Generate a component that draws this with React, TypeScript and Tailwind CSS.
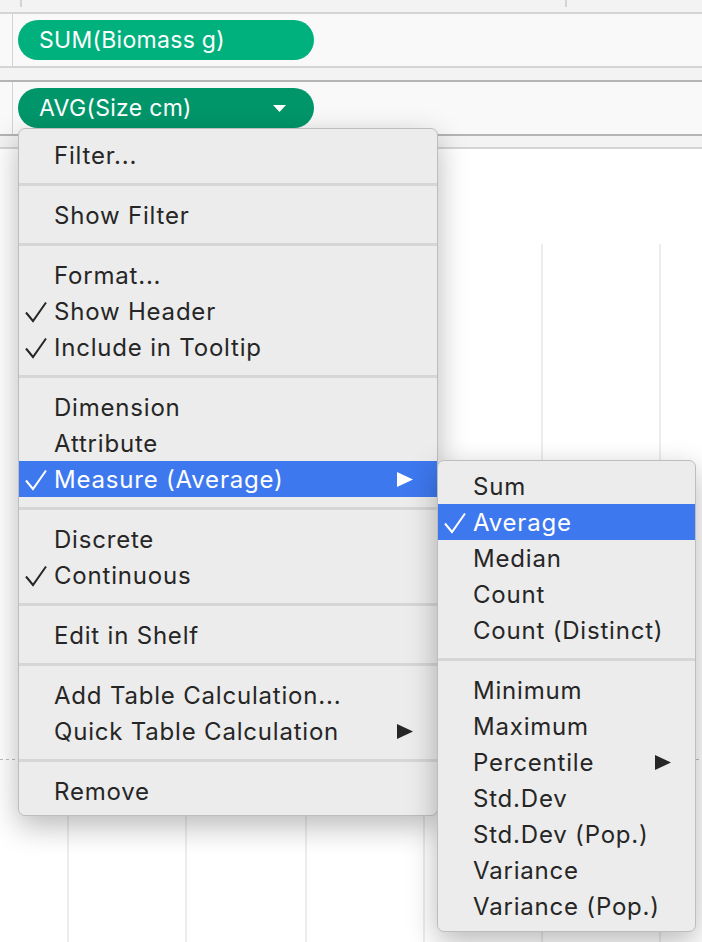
import React from 'react';

type Item = { label: string; checked?: boolean; arrow?: boolean; active?: boolean } | 'sep';

const mainItems: Item[] = [
  { label: 'Filter...' },
  'sep',
  { label: 'Show Filter' },
  'sep',
  { label: 'Format...' },
  { label: 'Show Header', checked: true },
  { label: 'Include in Tooltip', checked: true },
  'sep',
  { label: 'Dimension' },
  { label: 'Attribute' },
  { label: 'Measure (Average)', checked: true, arrow: true, active: true },
  'sep',
  { label: 'Discrete' },
  { label: 'Continuous', checked: true },
  'sep',
  { label: 'Edit in Shelf' },
  'sep',
  { label: 'Add Table Calculation...' },
  { label: 'Quick Table Calculation', arrow: true },
  'sep',
  { label: 'Remove' },
];

const subItems: Item[] = [
  { label: 'Sum' },
  { label: 'Average', checked: true, active: true },
  { label: 'Median' },
  { label: 'Count' },
  { label: 'Count (Distinct)' },
  'sep',
  { label: 'Minimum' },
  { label: 'Maximum' },
  { label: 'Percentile', arrow: true },
  { label: 'Std.Dev' },
  { label: 'Std.Dev (Pop.)' },
  { label: 'Variance' },
  { label: 'Variance (Pop.)' },
];

function Check() {
  return (
    <svg width="22" height="22" viewBox="0 0 22 22" fill="none" stroke="currentColor" strokeWidth={2}>
      <path d="M1 11.5 L8 20 L21 1.5" />
    </svg>
  );
}

function Arrow() {
  return (
    <svg width="16" height="15" viewBox="0 0 16 15" fill="currentColor">
      <polygon points="0,0 16,7.5 0,15" />
    </svg>
  );
}

function MenuList({ items }: { items: Item[] }) {
  return (
    <>
      {items.map((item, i) =>
        item === 'sep' ? (
          <div key={i} className="mt-[10px] mb-[11px] h-[3px] bg-[#d6d6d6]" />
        ) : (
          <div
            key={i}
            className={`relative flex h-[36px] items-center pt-[1px] pl-[35px] pr-[24px] ${
              item.active ? 'bg-[#3e78ef] text-white' : 'text-[#262626]'
            }`}
          >
            {item.checked && (
              <span className="absolute left-[6px] top-[8px]">
                <Check />
              </span>
            )}
            <span className="flex-1 whitespace-nowrap">{item.label}</span>
            {item.arrow && <Arrow />}
          </div>
        )
      )}
    </>
  );
}

function Pill({ label, dark }: { label: string; dark?: boolean }) {
  return (
    <div
      className={`flex h-[40px] w-[296px] items-center rounded-full pl-[21px] pr-[28px] text-[23px] tracking-[0.3px] text-white ${
        dark ? 'bg-[#00966a]' : 'bg-[#00b17d]'
      }`}
    >
      <span className="flex-1">{label}</span>
      {dark && (
        <svg width="13" height="7" viewBox="0 0 13 7" fill="white">
          <polygon points="0,0 13,0 6.5,7" />
        </svg>
      )}
    </div>
  );
}

export default function App() {
  return (
    <div
      className="relative flex h-[942px] w-[702px] flex-col overflow-hidden bg-white"
      style={{ fontFamily: 'Inter, "Noto Sans", sans-serif' }}
    >
      {/* shelf header strip */}
      <div className="flex h-[12px] bg-[#f3f3f3]">
        <div className="ml-[20px] h-[7px] w-[2px] bg-[#d4d4d4]" />
        <div className="ml-[543px] h-[7px] w-[2px] bg-[#d4d4d4]" />
      </div>
      <div className="h-[2px] bg-[#d4d4d4]" />

      {/* rows shelf */}
      <div className="flex h-[52px] bg-[#f9f9f9]">
        <div className="w-[13px] border-r border-[#d4d4d4]" />
        <div className="flex items-center pl-[5px]">
          <Pill label="SUM(Biomass g)" />
        </div>
      </div>
      <div className="h-[2px] bg-[#d4d4d4]" />
      <div className="h-[12px] bg-[#f3f3f3]" />
      <div className="h-[2px] bg-[#b4b4b4]" />

      {/* columns shelf */}
      <div className="flex h-[52px] bg-[#f9f9f9]">
        <div className="w-[13px] border-r border-[#d4d4d4]" />
        <div className="flex items-center pl-[5px]">
          <Pill label="AVG(Size cm)" dark />
        </div>
      </div>
      <div className="h-[2px] bg-[#b4b4b4]" />
      <div className="h-[11px] bg-[#f3f3f3]" />
      <div className="h-[2px] bg-[#d4d4d4]" />

      {/* chart area */}
      <div className="flex-1">
        <svg width="702" height="793" viewBox="0 0 702 793">
          {[68, 186, 306, 424, 542, 660].map((x) => (
            <line key={x} x1={x} y1={95} x2={x} y2={793} stroke="#ededed" strokeWidth={2} />
          ))}
          <line x1={0} y1={610.5} x2={702} y2={610.5} stroke="#bdbdbd" strokeWidth={1} strokeDasharray="3 3" />
        </svg>
      </div>

      {/* context menu */}
      <div className="absolute left-[18px] top-[128px] w-[420px] rounded-[7px] border border-[#bdbdbd] bg-[#ececec] pt-[8px] pb-[6px] text-[24px] tracking-[0.8px] shadow-[0_10px_30px_rgba(0,0,0,0.28)]">
        <MenuList items={mainItems} />
      </div>

      {/* submenu */}
      <div className="absolute left-[437px] top-[460px] w-[259px] rounded-[7px] border border-[#bdbdbd] bg-[#ececec] pt-[7px] pb-[7px] text-[24px] tracking-[0.8px] shadow-[0_10px_30px_rgba(0,0,0,0.28)]">
        <MenuList items={subItems} />
      </div>
    </div>
  );
}
